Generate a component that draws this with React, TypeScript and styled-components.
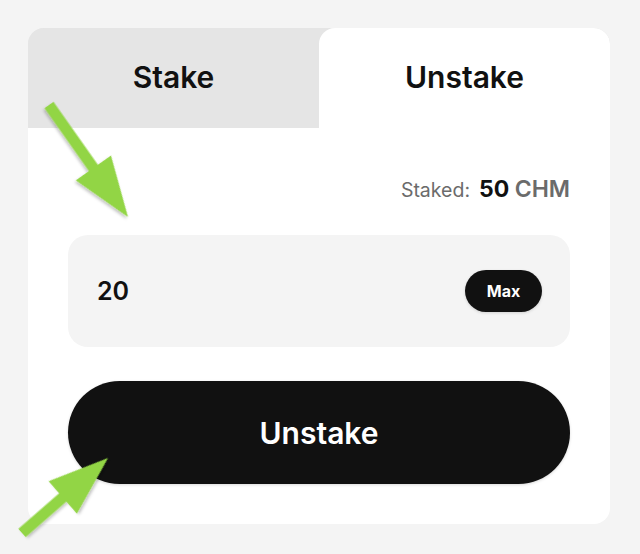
import React from "react";
import styled, { createGlobalStyle } from "styled-components";

const GlobalStyle = createGlobalStyle`
  html, body { margin: 0; padding: 0; background: #f4f4f4; }
  body { font-family: Inter, "Noto Sans", Arial, sans-serif; color: #111; }
  * { box-sizing: border-box; }
`;

const Page = styled.div`
  position: relative;
  width: 640px;
  height: 554px;
  padding: 28px 30px 30px 28px;
`;

const Card = styled.div`
  width: 582px;
  height: 496px;
  background: #fff;
  border-radius: 16px;
  overflow: hidden;
  display: flex;
  flex-direction: column;
`;

const Tabs = styled.div`
  display: grid;
  grid-template-columns: 291px 1fr;
  height: 100px;
  background: #e5e5e5;
`;

const Tab = styled.button<{ $active?: boolean }>`
  border: none;
  margin: 0;
  padding: 0;
  font-family: inherit;
  font-size: 30px;
  font-weight: 600;
  color: #111;
  background: ${(p) => (p.$active ? "#fff" : "#e5e5e5")};
  border-radius: ${(p) => (p.$active ? "16px 16px 0 0" : "0")};
  display: flex;
  align-items: center;
  justify-content: center;
  padding-bottom: 2px;
`;

const Body = styled.div`
  flex: 1;
  padding: 48px 40px 40px;
  display: flex;
  flex-direction: column;
`;

const BalanceRow = styled.div`
  display: flex;
  justify-content: flex-end;
  align-items: baseline;
  gap: 9px;
  height: 26px;
  line-height: 26px;
`;

const BalanceLabel = styled.span`
  font-size: 19.5px;
  color: #6b6b6b;
`;

const BalanceValue = styled.span`
  font-size: 23px;
  font-weight: 700;
  color: #111;
`;

const BalanceUnit = styled.span`
  font-weight: 600;
  color: #6b6b6b;
`;

const InputBox = styled.div`
  margin-top: 33px;
  height: 112px;
  background: #f4f4f4;
  border-radius: 20px;
  display: flex;
  align-items: center;
  justify-content: space-between;
  padding: 0 28px 0 29px;
`;

const Amount = styled.span`
  font-size: 25px;
  font-weight: 600;
  color: #111;
`;

const MaxButton = styled.button`
  border: none;
  width: 77px;
  height: 42px;
  border-radius: 21px;
  background: #111;
  color: #fff;
  font-family: inherit;
  font-size: 16px;
  font-weight: 700;
  box-shadow: 0 1px 3px rgba(0, 0, 0, 0.15);
`;

const ActionButton = styled.button`
  margin-top: 34px;
  height: 103px;
  border: none;
  border-radius: 52px;
  background: #111;
  color: #fff;
  font-family: inherit;
  font-size: 30px;
  font-weight: 600;
  box-shadow: 0 1px 3px rgba(0, 0, 0, 0.15);
`;

const Overlay = styled.svg`
  position: absolute;
  left: 0;
  top: 0;
  width: 640px;
  height: 554px;
  pointer-events: none;
`;

function arrowPoints(len: number) {
  const hw = 5.5;
  const hl = 60;
  const hh = 21.5;
  return [
    [0, -hw],
    [len - hl, -hw],
    [len - hl, -hh],
    [len, 0],
    [len - hl, hh],
    [len - hl, hw],
    [0, hw],
  ]
    .map((p) => p.join(","))
    .join(" ");
}

const arrows = [
  { x: 49, y: 105, tx: 128, ty: 217 },
  { x: 22, y: 533, tx: 108, ty: 458 },
];

export default function App() {
  return (
    <>
      <GlobalStyle />
      <Page>
        <Card>
          <Tabs>
            <Tab>Stake</Tab>
            <Tab $active>Unstake</Tab>
          </Tabs>
          <Body>
            <BalanceRow>
              <BalanceLabel>Staked:</BalanceLabel>
              <BalanceValue>
                50 <BalanceUnit>CHM</BalanceUnit>
              </BalanceValue>
            </BalanceRow>
            <InputBox>
              <Amount>20</Amount>
              <MaxButton>Max</MaxButton>
            </InputBox>
            <ActionButton>Unstake</ActionButton>
          </Body>
        </Card>
        <Overlay viewBox="0 0 640 554">
          <defs>
            <filter id="sh" x="-20%" y="-20%" width="140%" height="140%">
              <feDropShadow dx="1" dy="2" stdDeviation="1.5" floodColor="#000" floodOpacity="0.25" />
            </filter>
          </defs>
          {arrows.map((a, i) => {
            const dx = a.tx - a.x;
            const dy = a.ty - a.y;
            const len = Math.sqrt(dx * dx + dy * dy);
            const ang = (Math.atan2(dy, dx) * 180) / Math.PI;
            return (
              <polygon
                key={i}
                points={arrowPoints(len)}
                fill="#92d545"
                filter="url(#sh)"
                transform={`translate(${a.x} ${a.y}) rotate(${ang})`}
              />
            );
          })}
        </Overlay>
      </Page>
    </>
  );
}
